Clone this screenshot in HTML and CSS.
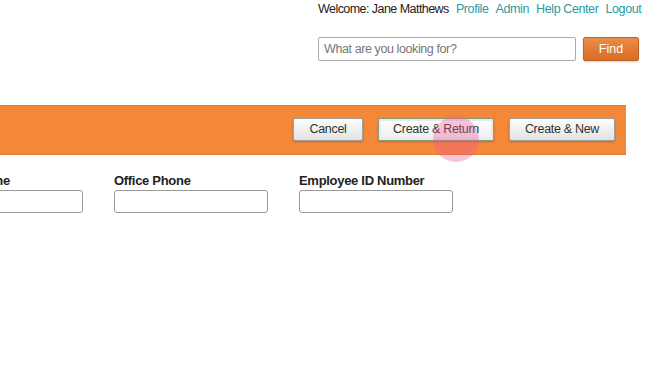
FILE: index.html
```html
<!DOCTYPE html>
<html lang="en">
  <head>
    <meta charset="UTF-8" />
    <meta name="viewport" content="width=device-width, initial-scale=1.0" />
    <title>New Employee</title>
    <link rel="stylesheet" href="styles.css">
  </head>
  <body>
    <div class="page">
      <div class="header">
        <div class="user-links">
          <span class="welcome">Welcome: Jane Matthews</span>
          <a href="#">Profile</a>
          <a href="#">Admin</a>
          <a href="#">Help Center</a>
          <a href="#">Logout</a>
        </div>
        <form class="search">
          <input type="text" placeholder="What are you looking for?" />
          <button type="submit" class="find-button">Find</button>
        </form>
      </div>

      <div class="action-bar">
        <button class="bar-button cancel">Cancel</button>
        <button class="bar-button focused">
          Create &amp; Return
          <span class="click-dot"></span>
        </button>
        <button class="bar-button create-new">Create &amp; New</button>
      </div>

      <div class="field-row">
        <div class="field">
          <label>Mobile Phone</label>
          <input type="text" />
        </div>
        <div class="field">
          <label>Office Phone</label>
          <input type="text" />
        </div>
        <div class="field">
          <label>Employee ID Number</label>
          <input type="text" />
        </div>
      </div>
    </div>
  </body>
</html>
```

FILE: styles.css
```css
body {
  font-family: 'Liberation Sans', Arial, sans-serif;
  margin: 0;
  padding: 0;
  background-color: #fff;
  color: #222;
  overflow: hidden;
}
.page {
  width: 662px;
}
.header {
  padding-left: 318px;
  height: 105px;
}
.user-links {
  font-size: 12.5px;
  letter-spacing: -0.4px;
  line-height: 18px;
  height: 18px;
  white-space: nowrap;
}
.user-links a {
  color: #2a9aa6;
  text-decoration: none;
  margin-left: 4px;
}
.welcome {
  color: #222;
  letter-spacing: -0.55px;
}
.search {
  display: flex;
  gap: 7px;
  margin-top: 19px;
}
.search input {
  width: 258px;
  height: 24px;
  box-sizing: border-box;
  border: 1px solid #aaa;
  border-radius: 2px;
  padding: 0 5px;
  font-family: inherit;
  font-size: 12.5px;
  letter-spacing: -0.4px;
  color: #333;
}
.search input::placeholder {
  color: #777;
}
.find-button {
  width: 56px;
  height: 24px;
  border: 1px solid #c0642a;
  border-radius: 2px;
  background: linear-gradient(#ea8c4a 0%, #d96c24 100%);
  color: #fff;
  font-family: inherit;
  font-size: 12.5px;
  box-shadow: 0 1px 2px rgba(0, 0, 0, 0.2);
}
.action-bar {
  width: 626px;
  height: 50px;
  box-sizing: border-box;
  background-color: #f48838;
  border-top: 1px solid #e07a34;
  border-bottom: 1px solid #e07a34;
  display: flex;
  justify-content: flex-end;
  align-items: center;
  gap: 15px;
  padding-right: 11px;
  padding-bottom: 2px;
}
.bar-button {
  position: relative;
  height: 23px;
  padding: 0;
  white-space: nowrap;
  border: 1px solid #a0a0a0;
  border-radius: 2px;
  background: linear-gradient(#fdfdfd 0%, #e2e2e2 100%);
  color: #333;
  font-family: inherit;
  font-size: 12.5px;
  letter-spacing: -0.3px;
  box-shadow: 0 1px 2px rgba(0, 0, 0, 0.25);
}
.cancel {
  width: 70px;
}
.create-new {
  width: 106px;
}
.bar-button.focused {
  width: 116px;
  border: 1px solid #8c9a82;
  box-shadow: inset 0 0 0 2px #e8ece4, 0 1px 2px rgba(0, 0, 0, 0.25);
  background: linear-gradient(#ffffff 0%, #eeeeee 100%);
}
.click-dot {
  position: absolute;
  left: 54px;
  top: -3px;
  width: 46px;
  height: 46px;
  border-radius: 50%;
  background-color: rgba(235, 90, 150, 0.35);
  pointer-events: none;
}
.field-row {
  display: flex;
  gap: 31px;
  margin-left: -71px;
  margin-top: 19px;
}
.field {
  width: 154px;
}
.field label {
  display: block;
  font-size: 13px;
  letter-spacing: -0.3px;
  font-weight: bold;
  color: #222;
  line-height: 14px;
  margin-bottom: 2px;
  white-space: nowrap;
}
.field input {
  width: 154px;
  height: 23px;
  box-sizing: border-box;
  border: 1px solid #999;
  border-radius: 3px;
}
```
